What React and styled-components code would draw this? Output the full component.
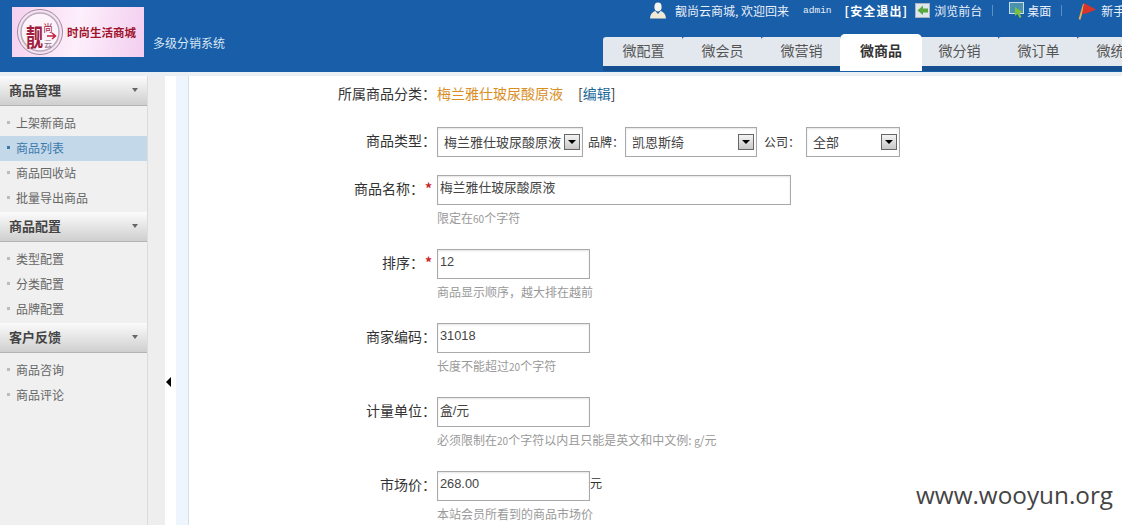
import styled, { createGlobalStyle } from "styled-components";
import { Fragment } from "react";

const CN = `"Noto Sans CJK SC", "Liberation Sans", sans-serif`;
const LATIN_CN = `"Liberation Sans", "Noto Sans CJK SC", sans-serif`;

const GlobalStyle = createGlobalStyle`
  html, body {
    margin: 0;
    height: 100%;
    overflow: hidden;
    background: #fff;
    font-family: ${CN};
    font-size: 12px;
    color: #333;
  }
  #root { height: 100%; }
`;

const Page = styled.div`
  position: relative;
  display: flex;
  flex-direction: column;
  width: 1122px;
  height: 525px;
  overflow: hidden;
`;

// header
const Header = styled.header`
  display: flex;
  flex: none;
  height: 72px;
  background: #185ea9;
`;
const Logo = styled.div`
  flex: none;
  display: flex;
  align-items: center;
  width: 132px;
  height: 50px;
  margin: 7px 0 0 12px;
  background: linear-gradient(100deg, #f5d0ef 0%, #fdeffb 50%, #f3cdf0 100%);
`;
const LogoMark = styled.svg`
  flex: none;
  margin-left: 5px;
`;
const LogoText = styled.span`
  margin-left: 4px;
  font-size: 11.5px;
  font-weight: 700;
  white-space: nowrap;
  color: #a0142c;
`;
const SubTitle = styled.div`
  flex: none;
  width: 450px;
  margin: 34px 0 0 9px;
  font-size: 12px;
  line-height: 17px;
  color: #d9e6f3;
`;
const NavColumn = styled.div`
  flex: 1;
  min-width: 0;
  overflow: hidden;
  display: flex;
  flex-direction: column;
`;
const TopBar = styled.div`
  display: flex;
  align-items: center;
  height: 20px;
  padding-left: 47px;
  white-space: nowrap;
  color: #e8f0f8;
  > * { flex: none; }
`;
const Welcome = styled.span`
  margin-left: 9px;
`;
const AdminName = styled.span`
  margin-left: 14px;
  font-family: "Liberation Mono", monospace;
  font-size: 9.5px;
`;
const Logout = styled.b`
  margin-left: 13px;
  color: #fff;
  font-weight: 700;
  font-size: 12px;
  letter-spacing: 1.1px;
`;
const TopLink = styled.span`
  display: inline-flex;
  align-items: center;
  gap: ${props => props.$iconGap || 4}px;
  margin-left: ${props => props.$gap || 0}px;
`;
const Divider = styled.span`
  width: 1px;
  height: 11px;
  margin-left: 10px;
  background: #5d8fc4;
`;
const TabStrip = styled.nav`
  display: flex;
  height: 38px;
  margin-top: 14px;
  align-items: flex-start;
`;
const Tab = styled.a`
  position: relative;
  flex: none;
  box-sizing: border-box;
  text-align: center;
  font-size: 14px;
  font-weight: ${props => props.$active ? 700 : 400};
  color: ${props => props.$active ? '#333' : '#555'};
  background: ${props => props.$active ? '#fff' : '#e3e8ee'};
  width: ${props => props.$active ? '82px' : '79px'};
  margin-right: ${props => props.$active ? '-3px' : '0'};
  padding-left: ${props => props.$active ? '0' : '2px'};
  z-index: ${props => props.$active ? 1 : 0};
  height: ${props => props.$active ? '37px' : '34px'};
  line-height: ${props => props.$active ? '33px' : '27px'};
  margin-top: ${props => props.$active ? '0' : '3px'};
  border-radius: ${props => props.$active ? '5px 5px 0 0' : '3px 0 0 0'};
  border-bottom: ${props => props.$active ? '0' : '5px solid #14508f'};
`;

// body
const Body = styled.div`
  flex: 1;
  display: flex;
  min-height: 0;
  padding-top: 4px;
  background: linear-gradient(#e9eff5 4px, #fff 4px);
`;
const Sidebar = styled.aside`
  flex: none;
  width: 147px;
  background: #f0f0f0;
  border-right: 1px solid #dcdcdc;
`;
const Section = styled.section`
  margin-bottom: 1px;
`;
const SectionHead = styled.h3`
  display: flex;
  align-items: center;
  justify-content: space-between;
  box-sizing: border-box;
  height: 30px;
  margin: 0;
  padding: 0 9px 2px;
  font-size: 13px;
  font-weight: 700;
  color: #444;
  background: linear-gradient(#fbfbfb, #cfcfcf);
  border-bottom: 1px solid #b4b4b4;
`;
const Caret = styled.i`
  width: 0;
  height: 0;
  border-left: 3px solid transparent;
  border-right: 3px solid transparent;
  border-top: 4px solid #666;
`;
const MenuList = styled.ul`
  list-style: none;
  margin: 0;
  padding: 5px 0 0;
`;
const MenuItem = styled.li`
  display: flex;
  align-items: center;
  gap: 6px;
  box-sizing: border-box;
  height: 25px;
  padding: 0 0 2px 7px;
  font-size: 12px;
  color: ${props => props.$active ? '#3b78ab' : '#666'};
  background: ${props => props.$active ? '#c3d9ea' : 'transparent'};
  &::before {
    content: "";
    width: 3px;
    height: 3px;
    background: ${props => props.$active ? '#3b78ab' : '#bbb'};
  }
`;
const Gutter = styled.div`
  position: relative;
  flex: none;
  width: 17px;
  background: #eeeeee;
`;
const Collapse = styled.i`
  position: absolute;
  left: 18px;
  top: 301px;
  width: 0;
  height: 0;
  border-top: 5px solid transparent;
  border-bottom: 5px solid transparent;
  border-right: 5px solid #000;
`;
const Spacer = styled.div`
  flex: none;
  width: 11px;
  background: #fff;
`;
const Rail = styled.div`
  flex: none;
  width: 12px;
  background: #eef5fc;
  border-right: 1px solid #d3e1ea;
`;
const Main = styled.main`
  flex: 1;
  min-width: 0;
  padding-top: 7px;
`;

// form
const Row = styled.div`
  display: grid;
  grid-template-columns: 247px 1fr;
  column-gap: 1px;
  margin-bottom: ${props => props.$mb ?? 22}px;
`;
const Label = styled.label`
  display: flex;
  align-items: center;
  justify-content: flex-end;
  box-sizing: border-box;
  height: ${props => props.$h || 30}px;
  padding-bottom: ${props => props.$h ? 0 : 4}px;
  font-size: 14px;
  color: #333;
  white-space: nowrap;
`;
const Star = styled.em`
  box-sizing: border-box;
  width: 12px;
  padding-right: 4px;
  text-align: right;
  font-style: normal;
  font-weight: 700;
  font-size: 14px;
  color: #c9252b;
`;
const CategoryLine = styled.div`
  display: flex;
  align-items: center;
  height: 20px;
  font-size: 14px;
`;
const CategoryName = styled.span`
  color: #d98e1f;
`;
const EditLink = styled.span`
  margin-left: 15px;
  color: #333;
  a { color: #1b6a97; }
`;
const Controls = styled.div`
  display: flex;
  align-items: center;
  height: 30px;
`;
const InlineLabel = styled.span`
  width: ${props => props.$w}px;
  margin-left: ${props => props.$ml}px;
  padding-bottom: 1px;
  font-size: 12px;
  white-space: nowrap;
  color: #333;
`;
const SelectWrap = styled.div`
  position: relative;
  flex: none;
  width: ${props => props.$w}px;
  height: 30px;
`;
const Select = styled.select`
  appearance: none;
  display: block;
  box-sizing: border-box;
  width: 100%;
  height: 100%;
  padding: 0 0 2px 6px;
  border: 1px solid #a9a9a9;
  border-radius: 0;
  background: #fff;
  box-shadow: inset 0 1px 2px #e4e4e4;
  font-family: ${CN};
  font-size: 13px;
  color: #444;
`;
const SelectArrow = styled.i`
  position: absolute;
  top: 7px;
  right: 3px;
  display: flex;
  align-items: center;
  justify-content: center;
  box-sizing: border-box;
  width: 16px;
  height: 16px;
  border: 1px solid #666;
  background: linear-gradient(#f4f4f4, #c8c8c8);
  pointer-events: none;
  &::after {
    content: "";
    border-left: 4px solid transparent;
    border-right: 4px solid transparent;
    border-top: 4px solid #000;
  }
`;
const InputLine = styled.div`
  display: flex;
  align-items: flex-start;
`;
const TextInput = styled.input`
  display: block;
  box-sizing: border-box;
  width: ${props => props.$w || 153}px;
  height: 30px;
  padding: 0 2px ${props => props.$pb || 5}px;
  border: 1px solid #a9a9a9;
  border-radius: 0;
  outline: 0;
  background: #fff;
  box-shadow: inset 0 1px 2px #e4e4e4;
  font-family: ${LATIN_CN};
  font-size: 12.8px;
  color: #444;
`;
const Unit = styled.span`
  font-size: 12px;
  line-height: 24px;
  color: #333;
`;
const Hint = styled.p`
  height: 18px;
  margin: 4px 0 0;
  font-size: 12px;
  line-height: 18px;
  color: #999;
  white-space: nowrap;
`;
const HintNum = styled.span`
  font-size: 10px;
`;
const Watermark = styled.div`
  position: absolute;
  left: 916px;
  top: 478px;
  font-family: "Open Sans", sans-serif;
  font-size: 24.3px;
  line-height: 33px;
  color: #444;
`;

// icons
const UserIcon = () => (
  <svg width="16" height="17" viewBox="0 0 16 17">
    <ellipse cx="8" cy="5" rx="3.6" ry="4.4" fill="#f5f5f0" />
    <path d="M0 16.5 C0.5 11 3.5 9.5 5.5 9 L8 12 L10.5 9 C12.5 9.5 15.5 11 16 16.5 Z" fill="#efe9d6" />
  </svg>
);
const BrowseIcon = () => (
  <svg width="15" height="16" viewBox="0 0 15 16">
    <rect x="0.5" y="1.5" width="14" height="14" fill="#dfe6ec" stroke="#a9b4be" />
    <path d="M8 3.5 L2.5 8.5 L8 13 V10.5 H13 V6.5 H8 Z" fill="#58a83f" />
  </svg>
);
const DesktopIcon = () => (
  <svg width="15" height="16" viewBox="0 0 15 16">
    <rect x="0.5" y="0.5" width="14" height="11" fill="#4a93b0" stroke="#c9dde6" />
    <path d="M6 5 L13.5 10 L10.5 11 L12.5 15 L10.5 16 L8.5 12 L6 14 Z" fill="#7cc13e" />
  </svg>
);
const FlagIcon = () => (
  <svg width="18" height="19" viewBox="0 0 18 19">
    <path d="M1.5 18.5 L6 3" stroke="#e6ad55" strokeWidth="2" />
    <path d="M6 2 L18 8.5 L8.5 12.5 L4 13 Z" fill="#d8352a" />
  </svg>
);

const menu = [
  { title: '商品管理', items: ['上架新商品', '商品列表', '商品回收站', '批量导出商品'], active: '商品列表' },
  { title: '商品配置', items: ['类型配置', '分类配置', '品牌配置'] },
  { title: '客户反馈', items: ['商品咨询', '商品评论'] },
];
const tabs = ['微配置', '微会员', '微营销', '微商品', '微分销', '微订单', '微统计'];

const fields = [
  { label: '排序：', value: '12', hint: <>商品显示顺序，越大排在越前</>, required: true },
  { label: '商家编码：', value: '31018', hint: <>长度不能超过<HintNum>20</HintNum>个字符</> },
  { label: '计量单位：', value: '盒/元', hint: <>必须限制在<HintNum>20</HintNum>个字符以内且只能是英文和中文例: <HintNum>g</HintNum>/元</> },
  { label: '市场价：', value: '268.00', hint: <>本站会员所看到的商品市场价</>, unit: '元' },
];

function App() {
  return (
    <Fragment>
      <GlobalStyle />
      <Page>
        <Header>
          <Logo>
            <LogoMark width="46" height="46" viewBox="0 0 46 46">
              <circle cx="23" cy="23" r="22.5" fill="#f7e2f3" stroke="#9a8a9c" />
              <circle cx="23" cy="23" r="19" fill="#fdf3fb" stroke="#b9a9bb" strokeWidth="1.5" />
              <text x="9" y="32" fontSize="17" fontWeight="700" fill="#a01c3c" fontFamily={CN} transform="translate(0 -8) scale(1 1.4)">靓</text>
              <text x="26" y="23" fontSize="10" fill="#a01c3c" fontFamily={CN}>尚</text>
              <text x="27" y="38" fontSize="8" fill="#8a6a7c" fontFamily={CN}>云</text>
              <path d="M30 27 H38 M35 24 L38.5 27 L35 30" stroke="#c22040" strokeWidth="1.5" fill="none" />
            </LogoMark>
            <LogoText>时尚生活商城</LogoText>
          </Logo>
          <SubTitle>多级分销系统</SubTitle>
          <NavColumn>
            <TopBar>
              <UserIcon />
              <Welcome>靓尚云商城, 欢迎回来</Welcome>
              <AdminName>admin</AdminName>
              <Logout>[安全退出]</Logout>
              <TopLink $gap={7}><BrowseIcon />浏览前台</TopLink>
              <Divider />
              <TopLink $gap={16} $iconGap={3}><DesktopIcon />桌面</TopLink>
              <Divider />
              <TopLink $gap={16} $iconGap={5}><FlagIcon />新手指南</TopLink>
            </TopBar>
            <TabStrip>
              {tabs.map(tab => (
                <Tab key={tab} $active={tab === '微商品'}>{tab}</Tab>
              ))}
            </TabStrip>
          </NavColumn>
        </Header>

        <Body>
          <Sidebar>
            {menu.map(group => (
              <Section key={group.title}>
                <SectionHead>{group.title}<Caret /></SectionHead>
                <MenuList>
                  {group.items.map(item => (
                    <MenuItem key={item} $active={item === group.active}>{item}</MenuItem>
                  ))}
                </MenuList>
              </Section>
            ))}
          </Sidebar>
          <Gutter><Collapse /></Gutter>
          <Spacer />
          <Rail />
          <Main>
            <Row $mb={24}>
              <Label $h={20}>所属商品分类：</Label>
              <CategoryLine>
                <CategoryName>梅兰雅仕玻尿酸原液</CategoryName>
                <EditLink>[<a>编辑</a>]</EditLink>
              </CategoryLine>
            </Row>

            <Row $mb={18}>
              <Label>商品类型：</Label>
              <Controls>
                <SelectWrap $w={146}>
                  <Select defaultValue="a"><option value="a">梅兰雅仕玻尿酸原液</option></Select>
                  <SelectArrow />
                </SelectWrap>
                <InlineLabel $ml={5} $w={37}>品牌：</InlineLabel>
                <SelectWrap $w={132}>
                  <Select defaultValue="a"><option value="a">凯恩斯绮</option></Select>
                  <SelectArrow />
                </SelectWrap>
                <InlineLabel $ml={7} $w={42}>公司：</InlineLabel>
                <SelectWrap $w={94}>
                  <Select defaultValue="a"><option value="a">全部</option></Select>
                  <SelectArrow />
                </SelectWrap>
              </Controls>
            </Row>

            <Row>
              <Label>商品名称：<Star>*</Star></Label>
              <div>
                <TextInput $w={354} $pb={7} defaultValue="梅兰雅仕玻尿酸原液" />
                <Hint>限定在<HintNum>60</HintNum>个字符</Hint>
              </div>
            </Row>

            {fields.map(field => (
              <Row key={field.label}>
                <Label>{field.label}{field.required && <Star>*</Star>}</Label>
                <div>
                  <InputLine>
                    <TextInput defaultValue={field.value} />
                    {field.unit && <Unit>{field.unit}</Unit>}
                  </InputLine>
                  <Hint>{field.hint}</Hint>
                </div>
              </Row>
            ))}
          </Main>
        </Body>
        <Watermark>www.wooyun.org</Watermark>
      </Page>
    </Fragment>
  );
}

export default App;
